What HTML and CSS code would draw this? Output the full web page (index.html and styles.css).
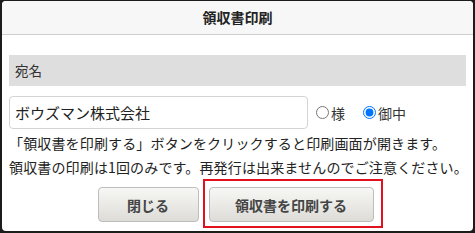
FILE: index.html
```html
<!DOCTYPE html>
<html lang="ja">
<head>
<meta charset="utf-8">
<link rel="stylesheet" href="styles.css">
</head>
<body>
<div class="dialog">
  <div class="dialog-header">領収書印刷</div>
  <div class="dialog-body">
    <div class="section-title">宛名</div>
    <div class="name-row">
      <input class="name-input" type="text" value="ボウズマン株式会社">
      <label class="radio"><input type="radio" name="suffix"><span>様</span></label>
      <label class="radio"><input type="radio" name="suffix" checked><span>御中</span></label>
    </div>
    <p class="note">「領収書を印刷する」ボタンをクリックすると印刷画面が開きます。<br>領収書の印刷は1回のみです。再発行は出来ませんのでご注意ください。</p>
    <div class="buttons">
      <button class="btn btn-close">閉じる</button>
      <button class="btn btn-print">領収書を印刷する</button>
    </div>
  </div>
</div>
</body>
</html>
```

FILE: styles.css
```css
html, body {
  margin: 0;
  padding: 0;
  height: 100%;
}
body {
  background: #1c1c1c;
  padding: 1px 2px 2px 2px;
  box-sizing: border-box;
  width: 475px;
  height: 233px;
  font-family: "Noto Sans CJK JP", "Noto Sans", sans-serif;
  color: #333;
}
.dialog {
  background: #fff;
  border-radius: 4px;
  height: 100%;
  overflow: hidden;
  display: flex;
  flex-direction: column;
}
.dialog-header {
  background: #f7f7f7;
  border-bottom: 1px solid #cfcfcf;
  height: 33px;
  line-height: 33px;
  text-align: center;
  font-size: 14px;
  font-weight: bold;
  color: #222;
}
.dialog-body {
  padding: 20px 7px 0 7px;
}
.section-title {
  background: #dedede;
  height: 31px;
  line-height: 31px;
  padding-left: 6px;
  font-size: 13.5px;
  color: #333;
}
.name-row {
  display: flex;
  align-items: center;
  margin-top: 10px;
}
.name-input {
  width: 299px;
  height: 33px;
  box-sizing: border-box;
  border: 1px solid #d4d4d4;
  border-radius: 4px;
  padding: 0 5px;
  font-family: inherit;
  font-size: 15px;
  color: #222;
  margin: 0 8px 0 0;
}
.radio {
  display: flex;
  align-items: center;
  font-size: 14px;
  color: #333;
  margin-right: 18px;
}
.radio input {
  margin: 0 2px 0 0;
  width: 13px;
  height: 13px;
}
.note {
  margin: 2px 0 0 0;
  font-size: 14px;
  line-height: 24px;
  letter-spacing: 0.15px;
  white-space: nowrap;
  color: #222;
}
.buttons {
  display: flex;
  justify-content: center;
  gap: 10px;
  margin-top: 8px;
  padding-right: 4px;
}
.btn {
  position: relative;
  height: 35px;
  border: 1px solid #bdbdbd;
  border-radius: 4px;
  background: linear-gradient(#f7f7f5, #dddcd7);
  font-family: inherit;
  font-size: 14px;
  font-weight: bold;
  color: #444;
  padding: 0;
}
.btn-close {
  width: 101px;
}
.btn-print {
  width: 165px;
}
.btn-print::after {
  content: "";
  position: absolute;
  left: -7px;
  right: -10px;
  top: -9px;
  bottom: -7px;
  border: 2px solid #e3101e;
}
```
